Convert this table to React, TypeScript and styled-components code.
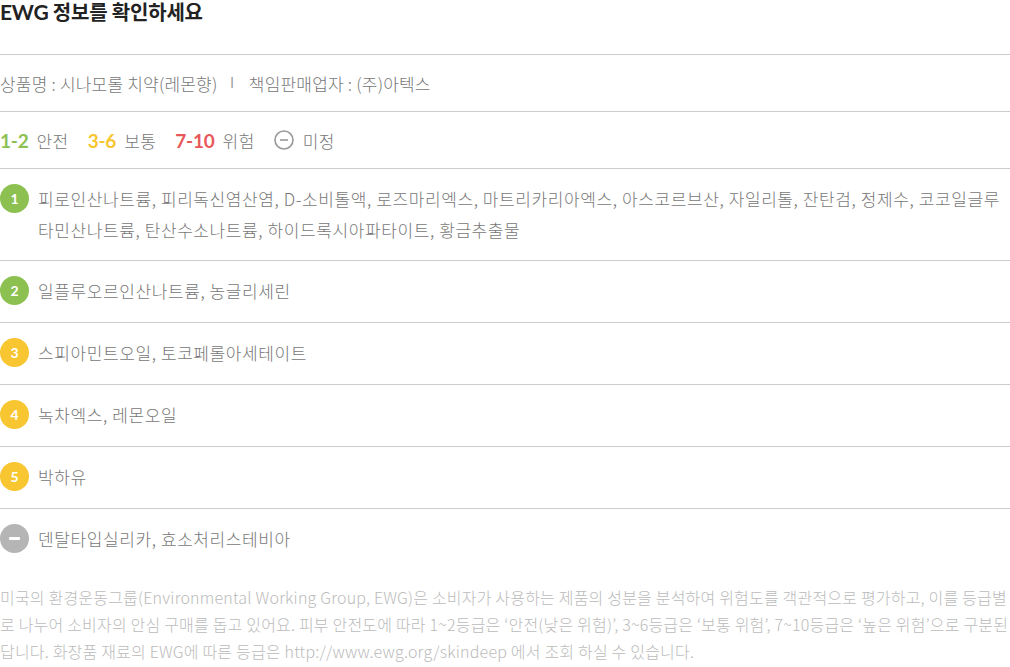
import styled, { createGlobalStyle } from 'styled-components';

const GlobalStyle = createGlobalStyle`
    body {
        margin: 0;
        background: #fff;
        font-family: 'Noto Sans CJK KR', 'Noto Sans', sans-serif;
    }
`;

type Grade = 'safe' | 'normal' | 'none';

const gradeColors: Record<Grade, string> = {
    safe: '#8cc152',
    normal: '#f8c630',
    none: '#b5b5b5',
};

const ingredients: { grade: string; level: Grade; text: string }[] = [
    {
        grade: '1',
        level: 'safe',
        text: '피로인산나트륨, 피리독신염산염, D-소비톨액, 로즈마리엑스, 마트리카리아엑스, 아스코르브산, 자일리톨, 잔탄검, 정제수, 코코일글루타민산나트륨, 탄산수소나트륨, 하이드록시아파타이트, 황금추출물',
    },
    { grade: '2', level: 'safe', text: '일플루오르인산나트륨, 농글리세린' },
    { grade: '3', level: 'normal', text: '스피아민트오일, 토코페롤아세테이트' },
    { grade: '4', level: 'normal', text: '녹차엑스, 레몬오일' },
    { grade: '5', level: 'normal', text: '박하유' },
    { grade: '', level: 'none', text: '덴탈타입실리카, 효소처리스테비아' },
];

const App = () => (
    <Container>
        <GlobalStyle />
        <Title>
            <span className='latin'>EWG</span> 정보를 확인하세요
        </Title>
        <Section>
            <ProductInfo>
                상품명 : 시나모롤 치약(레몬향)
                <Divider>l</Divider>
                책임판매업자 : (주)아텍스
            </ProductInfo>
        </Section>
        <Section>
            <Legend>
                <LegendItem>
                    <Range color='#8cc152'>1-2</Range>안전
                </LegendItem>
                <LegendItem>
                    <Range color='#f8c630'>3-6</Range>보통
                </LegendItem>
                <LegendItem>
                    <Range color='#e9575a'>7-10</Range>위험
                </LegendItem>
                <LegendItem>
                    <svg width='20' height='20' viewBox='0 0 20 20'>
                        <circle
                            cx='10'
                            cy='10'
                            r='9'
                            fill='none'
                            stroke='#999'
                            strokeWidth='1.6'
                        />
                        <line
                            x1='6'
                            y1='10'
                            x2='14'
                            y2='10'
                            stroke='#999'
                            strokeWidth='1.6'
                        />
                    </svg>
                    미정
                </LegendItem>
            </Legend>
        </Section>
        <List>
            {ingredients.map((item, i) => (
                <Row key={i}>
                    <Badge $color={gradeColors[item.level]}>
                        {item.level === 'none' ? <Dash /> : item.grade}
                    </Badge>
                    <RowText>{item.text}</RowText>
                </Row>
            ))}
        </List>
        <Footer>
            미국의 환경운동그룹(Environmental Working Group, EWG)은 소비자가
            사용하는 제품의 성분을 분석하여 위험도를 객관적으로 평가하고, 이를
            등급별로 나누어 소비자의 안심 구매를 돕고 있어요. 피부 안전도에 따라
            1~2등급은 ‘안전(낮은 위험)’, 3~6등급은 ‘보통 위험’, 7~10등급은 ‘높은
            위험’으로 구분된답니다. 화장품 재료의 EWG에 따른 등급은
            http://www.ewg.org/skindeep 에서 조회 하실 수 있습니다.
        </Footer>
    </Container>
);

const Container = styled.div`
    width: 1010px;
    color: #666;
`;

const Title = styled.h2`
    margin: 0;
    height: 55px;
    box-sizing: border-box;
    padding-top: 1px;
    font-size: 20px;
    font-weight: 700;
    line-height: 22px;
    color: #222;
    letter-spacing: -0.2px;
    border-bottom: 1px solid #ccc;
    .latin {
        font-family: 'Lato', sans-serif;
        font-weight: 700;
        font-size: 21px;
    }
`;

const Section = styled.div`
    height: 57px;
    box-sizing: border-box;
    display: flex;
    align-items: center;
    border-bottom: 1px solid #ccc;
`;

const ProductInfo = styled.p`
    margin: 0;
    font-size: 17px;
    font-weight: 300;
    color: #777;
    letter-spacing: 0.2px;
    display: flex;
    align-items: center;
`;

const Divider = styled.span`
    margin: 0 15px 0 13px;
    font-family: 'Liberation Sans', sans-serif;
    color: #999;
    font-size: 14px;
`;

const Legend = styled.div`
    display: flex;
    align-items: center;
    gap: 19px;
    font-size: 17px;
    font-weight: 300;
    letter-spacing: 0.4px;
    color: #777;
`;

const LegendItem = styled.span`
    display: flex;
    align-items: center;
    gap: 8px;
    svg {
        margin-right: 1px;
    }
`;

const Range = styled.span<{ color: string }>`
    font-family: 'Lato', sans-serif;
    font-weight: 700;
    font-size: 19px;
    letter-spacing: -0.2px;
    color: ${(p) => p.color};
`;

const List = styled.ul`
    list-style: none;
    margin: 0;
    padding: 0;
`;

const Row = styled.li`
    display: flex;
    align-items: flex-start;
    gap: 9px;
    padding: 14px 0 15px;
    min-height: 62px;
    box-sizing: border-box;
    border-bottom: 1px solid #ccc;
    &:last-child {
        border-bottom: none;
    }
`;

const Badge = styled.span<{ $color: string }>`
    flex: none;
    width: 29px;
    height: 29px;
    border-radius: 50%;
    background: ${(p) => p.$color};
    color: #fff;
    font-family: 'Lato', sans-serif;
    font-weight: 700;
    font-size: 14px;
    display: flex;
    align-items: center;
    justify-content: center;
    margin-top: 1px;
`;

const Dash = styled.span`
    width: 11px;
    height: 2.5px;
    background: #fff;
    border-radius: 1px;
`;

const RowText = styled.p`
    margin: 0;
    font-size: 17px;
    font-weight: 300;
    line-height: 31px;
    color: #777;
    letter-spacing: 0.6px;
`;

const Footer = styled.p`
    margin: 13px 0 0;
    font-size: 16px;
    font-weight: 300;
    line-height: 27px;
    color: #bbb;
    letter-spacing: 0.2px;
`;

export default App;
